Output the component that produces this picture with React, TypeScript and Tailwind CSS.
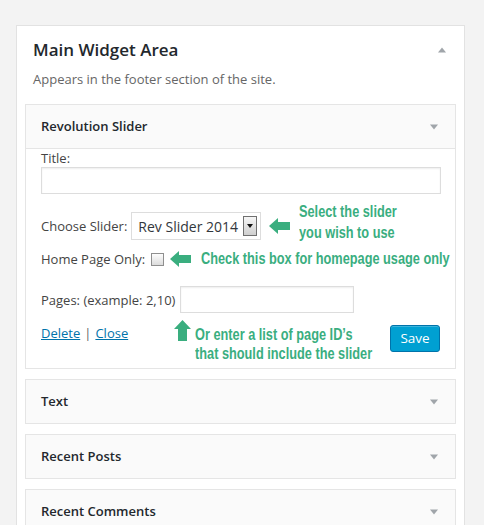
import React from 'react'

const sans = "font-['Open_Sans',sans-serif]"
const note =
  "inline-block origin-left scale-x-[0.75] whitespace-nowrap font-['Liberation_Sans',Arial,sans-serif] font-bold text-[#3aae7f]"

function DownTri() {
  return (
    <svg width="10" height="6" viewBox="0 0 10 6" className="shrink-0">
      <path d="M1 0.5h8L5 5.5z" fill="#a0a5aa" />
    </svg>
  )
}

function LeftArrow() {
  return (
    <svg width="22" height="16" viewBox="0 0 22 16" className="shrink-0">
      <path d="M0 8L9 0v4h12v8H9v4z" fill="#3aae7f" />
    </svg>
  )
}

function UpArrow() {
  return (
    <svg width="17" height="21" viewBox="0 0 17 21" className="shrink-0">
      <path d="M8.5 0L17 9h-4v12H4V9H0z" fill="#3aae7f" />
    </svg>
  )
}

function CollapsedWidget({ title }: { title: string }) {
  return (
    <div className="mt-[10px] flex h-[45px] items-center justify-between border border-[#e5e5e5] bg-[#fafafa] pl-[15px] pr-[16px]">
      <span className="text-[13px] font-semibold text-[#23282d]">{title}</span>
      <DownTri />
    </div>
  )
}

export default function App() {
  return (
    <div className={`min-h-[525px] overflow-hidden bg-[#f3f3f3] pt-[25px] pl-[16px] ${sans}`}>
      <div className="w-[449px] border border-[#e2e2e2] bg-white pb-[20px]">
        {/* sidebar header */}
        <div className="flex items-start justify-between pl-[16px] pr-[17px] pt-[12px]">
          <h2 className="text-[17px] font-semibold leading-[24px] text-[#23282d]">Main Widget Area</h2>
          <svg width="10" height="6" viewBox="0 0 10 6" className="mt-[9px]">
            <path d="M1 5.5h8L5 0.5z" fill="#a0a5aa" />
          </svg>
        </div>
        <p className="mt-[8px] pl-[16px] text-[13px] leading-[18px] text-[#666]">
          Appears in the footer section of the site.
        </p>

        <div className="mx-[8px] mt-[16px]">
          {/* open widget */}
          <div className="border border-[#e5e5e5]">
            <div className="flex h-[44px] items-center justify-between border-b border-[#e5e5e5] bg-[#fafafa] pl-[15px] pr-[16px]">
              <span className="text-[13px] font-semibold text-[#23282d]">Revolution Slider</span>
              <DownTri />
            </div>

            <div className="whitespace-nowrap bg-white px-[15px] pb-[16px] pt-0 text-[13px] text-[#444]">
              <div className="leading-[18px]">Title:</div>
              <div className="h-[27px] w-[400px] border border-[#ddd] shadow-[inset_0_1px_2px_rgba(0,0,0,0.07)]" />

              {/* choose slider */}
              <div className="mt-[18px] flex h-[28px] items-center">
                <span className="shrink-0 leading-[18px]">Choose Slider:</span>
                <div className="ml-[4px] flex h-[28px] w-[130px] shrink-0 items-center justify-between border border-[#ddd] pl-[6px] pr-[3px]">
                  <span className="text-[14px] text-[#32373c]">Rev Slider 2014</span>
                  <span className="flex h-[20px] w-[14px] items-center justify-center border border-[#707070] bg-[linear-gradient(#f6f6f6,#cfcfcf)]">
                    <svg width="6" height="4" viewBox="0 0 6 4">
                      <path d="M0 0h6L3 4z" fill="#111" />
                    </svg>
                  </span>
                </div>
                <span className="ml-[8px] shrink-0">
                  <LeftArrow />
                </span>
                <div className="mb-[8px] ml-[8px] shrink-0 text-[17px] leading-[20px]">
                  <span className={note}>Select the slider</span>
                  <br />
                  <span className={note}>you wish to use</span>
                </div>
              </div>

              {/* home page only */}
              <div className="mt-[10px] flex h-[18px] items-center">
                <span className="shrink-0 leading-[18px]">Home Page Only:</span>
                <span className="ml-[6px] mt-[1px] h-[13px] w-[13px] shrink-0 border border-[#8f8f8f] bg-[linear-gradient(#fdfdfd,#dcdcdc)]" />
                <span className="ml-[6px] shrink-0">
                  <LeftArrow />
                </span>
                <span className={`ml-[9px] shrink-0 text-[17px] leading-[20px] ${note}`}>
                  Check this box for homepage usage only
                </span>
              </div>

              {/* pages */}
              <div className="mt-[18px] flex h-[27px] items-center">
                <span className="shrink-0 leading-[18px]">Pages: (example: 2,10)</span>
                <div className="ml-[5px] h-[27px] w-[174px] shrink-0 border border-[#ddd] shadow-[inset_0_1px_2px_rgba(0,0,0,0.07)]" />
              </div>

              {/* actions */}
              <div className="mt-[12px] flex h-[27px] items-start">
                <div className="mt-[-1px] shrink-0 leading-[18px]">
                  <a href="#" className="text-[#0073aa] underline">Delete</a>
                  <span className="mx-[4px] text-[#666]">|</span>
                  <a href="#" className="text-[#0073aa] underline">Close</a>
                </div>
                <span className="ml-[46px] mt-[-5px] shrink-0">
                  <UpArrow />
                </span>
                <div className="ml-[4px] w-[180px] shrink-0 text-[17px] leading-[18px]">
                  <span className={note}>Or enter a list of page ID’s</span>
                  <br />
                  <span className={note}>that should include the slider</span>
                </div>
                <button className="ml-auto h-[27px] w-[50px] shrink-0 rounded-[3px] border border-[#0073aa] bg-[#00a0d2] text-[13.5px] text-white shadow-[inset_0_1px_0_rgba(120,200,230,0.5)]">
                  Save
                </button>
              </div>
            </div>
          </div>

          <CollapsedWidget title="Text" />
          <CollapsedWidget title="Recent Posts" />
          <CollapsedWidget title="Recent Comments" />
        </div>
      </div>
    </div>
  )
}
